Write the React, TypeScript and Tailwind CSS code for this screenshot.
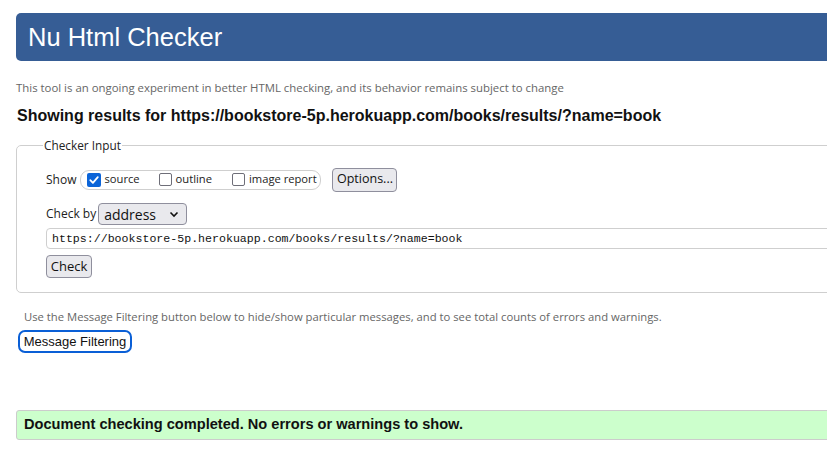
import React from "react";

const ui = { fontFamily: '"Open Sans", "Noto Sans", sans-serif' };
const arial = { fontFamily: '"Liberation Sans", Arial, sans-serif' };
const mono = { fontFamily: '"Liberation Mono", "DejaVu Sans Mono", monospace' };

function Box({ checked }: { checked?: boolean }) {
  if (checked) {
    return (
      <span className="w-[14px] h-[14px] rounded-[2px] bg-[#0b64d8] flex items-center justify-center shrink-0">
        <svg width="12" height="12" viewBox="0 0 12 12">
          <path d="M2.3 6.2 L4.9 8.8 L9.8 3.2" fill="none" stroke="white" strokeWidth="1.8" strokeLinecap="round" strokeLinejoin="round" />
        </svg>
      </span>
    );
  }
  return <span className="block w-[13px] h-[13px] rounded-[2px] border-[1.5px] border-[#6e6e78] bg-white shrink-0" />;
}

export default function App() {
  return (
    <div className="w-[827px] h-[449px] overflow-hidden bg-white text-black">
      <div className="w-[880px] ml-4">
        <div
          className="mt-[13px] h-[48px] rounded-[5px] bg-[#365d95] text-white text-[25.5px] pl-[12px] flex items-center"
          style={arial}
        >
          Nu Html Checker
        </div>
        <p className="mt-[19px] h-[16px] leading-[16px] text-[11.4px] text-[#666]" style={ui}>
          This tool is an ongoing experiment in better HTML checking, and its behavior remains subject to change
        </p>
        <h2 className="mt-[10px] ml-[1px] h-[20px] leading-[20px] text-[16px] font-bold text-[#111]" style={arial}>
          Showing results for https://bookstore-5p.herokuapp.com/books/results/?name=book
        </h2>
        <fieldset className="mt-[10px] border border-[#cfcfcf] rounded-[5px] pl-[29px] pb-[14px]" style={ui}>
          <legend className="ml-[-3px] px-[1px] text-[11.8px] leading-[18px] text-[#222]">Checker Input</legend>
          <div className="mt-[14px] h-[23px] flex items-center text-[12px] text-[#222] whitespace-nowrap">
            <span>Show</span>
            <div className="ml-[4px] h-[20px] w-[241px] rounded-[9px] border border-[#cfcfcf] flex items-center pl-[6px] text-[11.2px]">
              <Box checked />
              <span className="ml-[3px]">source</span>
              <span className="ml-[19px]"><Box /></span>
              <span className="ml-[4px]">outline</span>
              <span className="ml-[20px]"><Box /></span>
              <span className="ml-[4px]">image report</span>
            </div>
            <button className="ml-[11px] h-[24px] w-[65px] rounded-[4px] border border-[#8f8f9d] bg-[#e9e9ed] text-[12.5px] text-[#111] flex items-center justify-center">
              Options...
            </button>
          </div>
          <div className="mt-[12px] h-[22px] flex items-center text-[12px] text-[#222]">
            <span>Check by</span>
            <div className="ml-[2px] h-[22px] w-[89px] rounded-[4px] border border-[#8f8f9d] bg-[#e9e9ed] flex items-center pl-[5px] pr-[7px] justify-between">
              <span className="text-[14px] text-[#111]">address</span>
              <svg width="10" height="10" viewBox="0 0 10 10">
                <path d="M1.5 3.5 L5 7 L8.5 3.5" fill="none" stroke="#111" strokeWidth="1.6" />
              </svg>
            </div>
          </div>
          <div className="mt-[3px] h-[21px] rounded-[4px] border border-[#cfcfcf] flex items-center pl-[5px] text-[11.6px] text-[#111]" style={mono}>
            https://bookstore-5p.herokuapp.com/books/results/?name=book
          </div>
          <button className="mt-[6px] h-[23px] w-[46px] rounded-[4px] border border-[#8f8f9d] bg-[#e9e9ed] text-[13px] text-[#111] flex items-center justify-center">
            Check
          </button>
        </fieldset>
        <p className="mt-[16px] ml-[8px] h-[16px] leading-[16px] text-[11.27px] text-[#666]" style={ui}>
          Use the Message Filtering button below to hide/show particular messages, and to see total counts of errors and warnings.
        </p>
        <button
          className="mt-[5px] ml-[2px] h-[23px] w-[114px] rounded-[7px] border-2 border-[#0a5fd6] bg-white text-[13px] text-[#111] flex items-center justify-center"
          style={arial}
        >
          Message Filtering
        </button>
        <div
          className="mt-[57px] h-[30px] rounded-[3px] border border-[#cccccc] bg-[#ccffcc] pl-[7px] flex items-center text-[14.6px] font-bold text-[#111]"
          style={arial}
        >
          Document checking completed. No errors or warnings to show.
        </div>
      </div>
    </div>
  );
}
